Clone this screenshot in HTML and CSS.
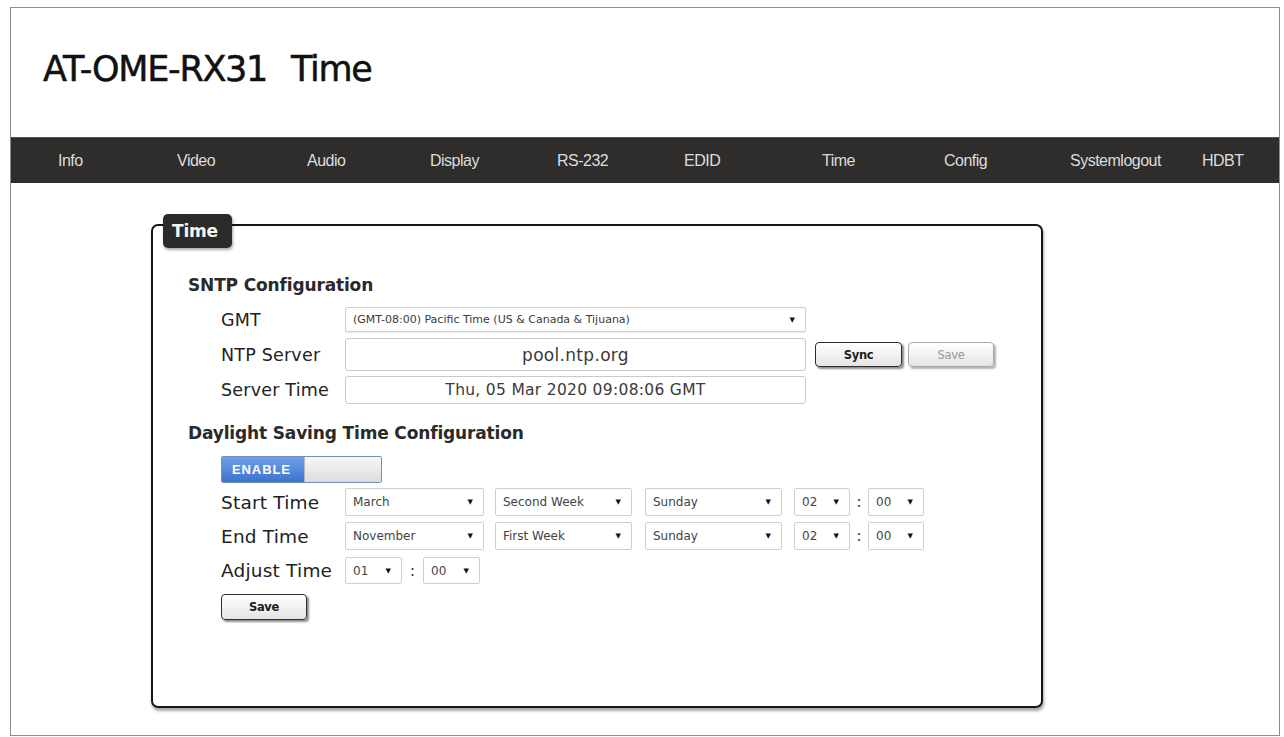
FILE: index.html
```html
<!DOCTYPE html>
<html lang="en">
<head>
<meta charset="utf-8">
<title>AT-OME-RX31 Time</title>
<link rel="stylesheet" href="styles.css">
</head>
<body>
<div class="frame">
  <header class="masthead">
    <h1 class="title">AT-OME-RX31<span class="title-gap"></span>Time</h1>
  </header>

  <nav class="menu">
    <a class="menu-item">Info</a>
    <a class="menu-item">Video</a>
    <a class="menu-item">Audio</a>
    <a class="menu-item">Display</a>
    <a class="menu-item">RS-232</a>
    <a class="menu-item">EDID</a>
    <a class="menu-item">Time</a>
    <a class="menu-item">Config</a>
    <a class="menu-item">Systemlogout</a>
    <a class="menu-item">HDBT</a>
  </nav>

  <main class="content">
    <section class="panel">
      <div class="panel-tag">Time</div>

      <h2 class="section-title">SNTP Configuration</h2>
      <div class="form">
        <div class="row row-gmt">
          <span class="label">GMT</span>
          <div class="select select-gmt"><span class="select-value">(GMT-08:00) Pacific Time (US &amp; Canada &amp; Tijuana)</span><span class="caret">&#9660;</span></div>
        </div>
        <div class="row row-ntp">
          <span class="label">NTP Server</span>
          <div class="field field-ntp">pool.ntp.org</div>
          <div class="actions">
            <button class="btn btn-strong">Sync</button>
            <button class="btn btn-disabled">Save</button>
          </div>
        </div>
        <div class="row row-time">
          <span class="label">Server Time</span>
          <div class="field field-time">Thu, 05 Mar 2020 09:08:06 GMT</div>
        </div>
      </div>

      <h2 class="section-title section-title-dst">Daylight Saving Time Configuration</h2>
      <div class="form form-dst">
        <div class="toggle">
          <span class="toggle-on">ENABLE</span>
          <span class="toggle-off"></span>
        </div>
        <div class="row row-dst row-start">
          <span class="label">Start Time</span>
          <div class="select select-month"><span class="select-value">March</span><span class="caret">&#9660;</span></div>
          <div class="select select-week"><span class="select-value">Second Week</span><span class="caret">&#9660;</span></div>
          <div class="select select-day"><span class="select-value">Sunday</span><span class="caret">&#9660;</span></div>
          <div class="select select-num"><span class="select-value">02</span><span class="caret">&#9660;</span></div>
          <span class="colon">:</span>
          <div class="select select-num"><span class="select-value">00</span><span class="caret">&#9660;</span></div>
        </div>
        <div class="row row-dst row-end">
          <span class="label">End Time</span>
          <div class="select select-month"><span class="select-value">November</span><span class="caret">&#9660;</span></div>
          <div class="select select-week"><span class="select-value">First Week</span><span class="caret">&#9660;</span></div>
          <div class="select select-day"><span class="select-value">Sunday</span><span class="caret">&#9660;</span></div>
          <div class="select select-num"><span class="select-value">02</span><span class="caret">&#9660;</span></div>
          <span class="colon">:</span>
          <div class="select select-num"><span class="select-value">00</span><span class="caret">&#9660;</span></div>
        </div>
        <div class="row row-dst row-adjust">
          <span class="label">Adjust Time</span>
          <div class="select select-num select-adjust"><span class="select-value">01</span><span class="caret">&#9660;</span></div>
          <span class="colon colon-adjust">:</span>
          <div class="select select-num select-adjust"><span class="select-value">00</span><span class="caret">&#9660;</span></div>
        </div>
        <button class="btn btn-strong btn-save">Save</button>
      </div>
    </section>
  </main>
</div>
</body>
</html>
```

FILE: styles.css
```css
* {
  box-sizing: border-box;
}

html, body {
  margin: 0;
  padding: 0;
  background: #ffffff;
}

body {
  font-family: "DejaVu Sans", Verdana, sans-serif;
  color: #222;
}

/* outer page frame */
.frame {
  margin: 7px 4px 0 10px;
  width: 1270px;
  height: 729px;
  border: 1px solid #8c8c8c;
  display: flex;
  flex-direction: column;
}

/* header with product name */
.masthead {
  height: 129px;
  padding: 40px 0 0 32px;
}

.title {
  margin: 0;
  font-family: "DejaVu Sans", Verdana, sans-serif;
  font-weight: normal;
  font-size: 35px;
  line-height: 43px;
  letter-spacing: -1.3px;
  color: #111;
  -webkit-text-stroke: 0.5px #111;
}

.title-gap {
  display: inline-block;
  width: 24px;
}

/* dark navigation strip */
.menu {
  height: 46px;
  background: #2f2d2c;
  display: grid;
  grid-template-columns: 119px 130px 123px 127px 127px 138px 122px 126px 132px auto;
  align-items: center;
  padding-left: 47px;
  border-top: 1px solid #555;
}

.menu-item {
  font-family: "Liberation Sans", Arial, sans-serif;
  font-size: 16px;
  color: #dcdcdc;
  letter-spacing: -0.5px;
  white-space: nowrap;
  padding-top: 1px;
}

/* main area */
.content {
  padding: 41px 0 0 140px;
}

.panel {
  position: relative;
  width: 892px;
  height: 484px;
  border: 2px solid #161616;
  border-radius: 7px;
  box-shadow: 1px 3px 3px rgba(0, 0, 0, 0.35);
  padding: 49px 0 0 35px;
}

.panel-tag {
  position: absolute;
  top: -12px;
  left: 10px;
  width: 69px;
  height: 34px;
  background: #2b2a29;
  border-radius: 5px;
  box-shadow: 1px 2px 3px rgba(0, 0, 0, 0.35);
  color: #f4f4f4;
  font-family: "DejaVu Sans", Verdana, sans-serif;
  font-weight: bold;
  font-size: 17px;
  letter-spacing: -0.2px;
  line-height: 35px;
  padding-left: 9px;
}

.section-title {
  margin: 0;
  font-family: "DejaVu Sans", Verdana, sans-serif;
  font-weight: bold;
  font-size: 17px;
  line-height: 21px;
  letter-spacing: -0.15px;
  color: #2a2a2a;
}

.section-title-dst {
  margin-top: 19px;
}

.form {
  padding-left: 33px;
  margin-top: 11px;
  display: flex;
  flex-direction: column;
}

.form-dst {
  margin-top: 12px;
}

.row {
  display: flex;
  align-items: center;
}

.label {
  width: 124px;
  flex: none;
  font-size: 17.5px;
  letter-spacing: 0.2px;
  color: #222;
  white-space: nowrap;
}

.row-gmt {
  height: 25px;
  margin-bottom: 6px;
}

.row-ntp {
  height: 33px;
  margin-bottom: 5px;
}

.row-time {
  height: 28px;
}

/* drop-down lists */
.select {
  height: 100%;
  flex: none;
  display: flex;
  align-items: center;
  justify-content: space-between;
  border: 1px solid #cfcfcf;
  border-radius: 2px;
  background: #fff;
  padding: 0 10px 0 7px;
  font-family: "DejaVu Sans", Verdana, sans-serif;
  font-size: 11px;
  letter-spacing: 0;
  color: #3a3a3a;
  white-space: nowrap;
}

.caret {
  font-size: 7px;
  color: #111;
}

.select-gmt {
  width: 461px;
  box-shadow: 0 1px 1px rgba(0, 0, 0, 0.08);
}

.row-dst .select {
  font-size: 12px;
  color: #444;
}

.select-month {
  width: 139px;
  margin-right: 11px;
}

.select-week {
  width: 137px;
  margin-right: 13px;
}

.select-day {
  width: 137px;
  margin-right: 12px;
}

.select-num {
  width: 56px;
}

.colon {
  width: 18px;
  flex: none;
  text-align: center;
  font-size: 15px;
  color: #333;
}

.select-adjust {
  width: 57px;
}

.colon-adjust {
  width: 21px;
}

/* read-only text boxes */
.field {
  width: 461px;
  height: 100%;
  flex: none;
  display: flex;
  align-items: center;
  justify-content: center;
  border: 1px solid #c9c9c9;
  border-radius: 3px;
  background: #fff;
  color: #3a3a3a;
}

.field-ntp {
  font-size: 17px;
  letter-spacing: 0.3px;
}

.field-time {
  font-size: 15.5px;
  letter-spacing: 0.3px;
}

.actions {
  display: flex;
  gap: 6px;
  margin-left: 9px;
}

/* buttons */
.btn {
  width: 87px;
  height: 25px;
  border-radius: 4px;
  background: linear-gradient(#ffffff, #e4e4e4);
  font-family: "DejaVu Sans", Verdana, sans-serif;
  font-size: 11.5px;
  letter-spacing: -0.3px;
  padding: 0;
  cursor: pointer;
}

.btn-strong {
  border: 1px solid #2e2e2e;
  color: #1d1d1d;
  font-weight: bold;
  box-shadow: 2px 2px 2px rgba(0, 0, 0, 0.45);
}

.btn-disabled {
  width: 86px;
  border: 1px solid #a9a9a9;
  color: #9a9a9a;
  box-shadow: 2px 2px 2px rgba(0, 0, 0, 0.3);
}

.btn-save {
  width: 86px;
  height: 26px;
  margin-top: 10px;
}

/* on/off switch */
.toggle {
  display: flex;
  width: 161px;
  height: 27px;
  border: 1px solid #6e8fb9;
  border-radius: 2px;
  overflow: hidden;
  margin-bottom: 5px;
}

.toggle-on {
  width: 82px;
  background: linear-gradient(#6fa0e6, #3c73cf);
  color: #fff;
  font-family: "Liberation Sans", Arial, sans-serif;
  font-weight: bold;
  font-size: 13px;
  display: flex;
  align-items: center;
  padding-left: 10px;
  letter-spacing: 0.9px;
}

.toggle-off {
  flex: 1;
  background: linear-gradient(#f7f7f7, #dcdcdc);
  border-left: 1px solid #b7b7b7;
}

.row-dst {
  height: 28px;
}

.row-dst .label {
  font-size: 18.5px;
}

.row-start {
  margin-bottom: 6px;
}

.row-end {
  margin-bottom: 7px;
}

.row-adjust {
  height: 27px;
}
```
